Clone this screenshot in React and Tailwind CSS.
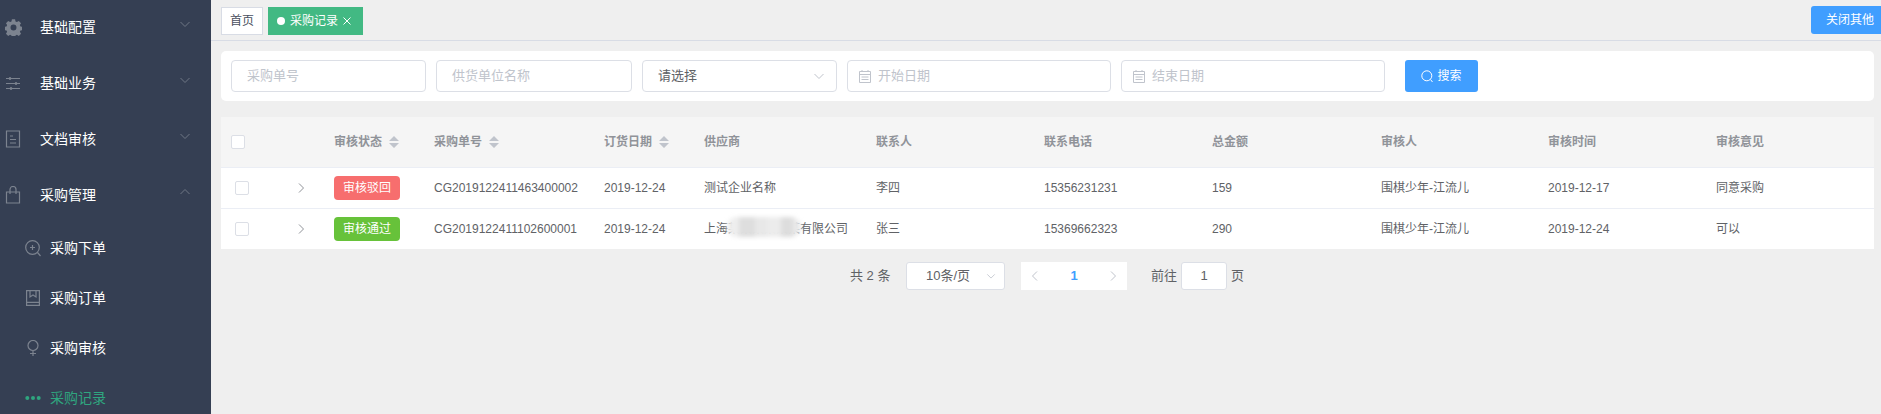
import React from "react";

const FONT = "font-['Liberation_Sans','Noto_Sans_CJK_SC',sans-serif]";

const Chevron = ({ dir = "down", className = "", size = 12, color = "currentColor", sw = 1 }) => {
  const d = {
    down: "M1.5 4 L6 8.5 L10.5 4",
    up: "M1.5 8 L6 3.5 L10.5 8",
    right: "M4 1.5 L8.5 6 L4 10.5",
    left: "M8 1.5 L3.5 6 L8 10.5",
  }[dir];
  return (
    <svg width={size} height={size} viewBox="0 0 12 12" fill="none" stroke={color} strokeWidth={sw} className={className}>
      <path d={d} />
    </svg>
  );
};

const Gear = () => (
  <svg width="17" height="17" viewBox="0 0 16 16" fill="#7c838f">
    <path fillRule="evenodd" d="M6.5 0.3h3l.4 2 1.3.6 1.8-1.1 2.1 2.1-1.1 1.8.6 1.3 2 .4v3l-2 .4-.6 1.3 1.1 1.8-2.1 2.1-1.8-1.1-1.3.6-.4 2h-3l-.4-2-1.3-.6-1.8 1.1-2.1-2.1 1.1-1.8-.6-1.3-2-.4v-3l2-.4.6-1.3-1.1-1.8 2.1-2.1 1.8 1.1 1.3-.6zM8 5.2a2.8 2.8 0 1 0 0 5.6a2.8 2.8 0 0 0 0-5.6z" />
  </svg>
);
const Sliders = () => (
  <svg width="16" height="16" viewBox="0 0 16 16" fill="#7c838f" stroke="#7c838f" strokeWidth="1">
    <path d="M1 3.5h14M1 8.5h14M1 13.5h14" />
    <circle cx="5" cy="3.5" r="1" />
    <circle cx="11" cy="8.5" r="1" />
    <circle cx="6" cy="13.5" r="1" />
  </svg>
);
const Doc = () => (
  <svg width="16" height="18" viewBox="0 0 16 18" fill="none" stroke="#7c838f" strokeWidth="1.2">
    <path d="M1.5 1h13v16h-13z" />
    <path d="M5 6h3M5 9.5h6M5 13h6" />
  </svg>
);
const Bag = () => (
  <svg width="16" height="18" viewBox="0 0 16 18" fill="none" stroke="#7c838f" strokeWidth="1.2">
    <path d="M1.5 6h13v11h-13z" />
    <path d="M5 8V3.5a3 3 0 0 1 6 0V8" />
  </svg>
);
const ZoomPlus = () => (
  <svg width="16" height="17" viewBox="0 0 16 17" fill="none" stroke="#7c838f" strokeWidth="1.2">
    <circle cx="7.5" cy="7.5" r="6.8" />
    <path d="M7.5 5v5M5 7.5h5M12.5 12.5l3 3.5" />
  </svg>
);
const Book = () => (
  <svg width="14" height="16" viewBox="0 0 14 16" fill="none" stroke="#7c838f" strokeWidth="1.2">
    <path d="M.6.6h12.8v14.8H.6z" />
    <path d="M.6 12.4h12.8M4 .6v6.4l3-2 3 2V.6" />
  </svg>
);
const Female = () => (
  <svg width="12" height="16" viewBox="0 0 12 16" fill="none" stroke="#7c838f" strokeWidth="1.2">
    <circle cx="6" cy="5.5" r="5" />
    <path d="M6 10.5V16M3 13.5h6" />
  </svg>
);
const Dots = () => (
  <svg width="16" height="6" viewBox="0 0 16 6" fill="#2fa57f">
    <circle cx="2.3" cy="3" r="2" />
    <circle cx="8" cy="3" r="2" />
    <circle cx="13.7" cy="3" r="2" />
  </svg>
);
const Calendar = () => (
  <svg width="12" height="13" viewBox="0 0 12 13" fill="none" stroke="#c0c4cc" strokeWidth="1">
    <path d="M.5 1.5h11v11H.5zM.5 4.5h11M2.5 7h7M2.5 9.5h7M3 0v2M9 0v2" />
  </svg>
);
const Search = ({ color = "#fff" }) => (
  <svg width="12" height="13" viewBox="0 0 12 13" fill="none" stroke={color} strokeWidth="1">
    <circle cx="5.8" cy="5.8" r="5" />
    <path d="M9.5 9.5l2 2.5" />
  </svg>
);

const Caret = () => (
  <svg width="10" height="12" viewBox="0 0 10 12" fill="#c0c4cc" className="ml-[7px] shrink-0">
    <path d="M5 0L10 5H0zM0 7H10L5 12z" />
  </svg>
);

const Box = ({ className = "" }) => (
  <span className={`block h-[14px] w-[14px] rounded-[2px] border border-[#dcdfe6] bg-white ${className}`} />
);

const TopItem = ({ icon, label, open }) => (
  <div className="flex h-[56px] items-center text-[14px] text-white">
    <span className="flex w-[26px] justify-center">{icon}</span>
    <span className="ml-[14px] flex-1">{label}</span>
    <Chevron dir={open ? "up" : "down"} color="#6f7785" className="mr-[20px] -mt-[6px]" />
  </div>
);
const SubItem = ({ icon, label, active }) => (
  <div className={`flex h-[50px] items-center text-[14px] ${active ? "text-[#2fa57f]" : "text-white"}`}>
    <span className="ml-[25px] flex w-[16px] justify-center">{icon}</span>
    <span className="ml-[9px]">{label}</span>
  </div>
);

const Field = ({ width, icon, children }) => (
  <div className={`flex h-[32px] items-center rounded-[4px] border border-[#dcdfe6] bg-white text-[13px] text-[#c0c4cc] ${width}`}>
    {icon ? <span className="ml-[11px] mr-[7px] flex">{icon}</span> : <span className="w-[15px]" />}
    <span>{children}</span>
  </div>
);

const COLS = "grid grid-cols-[60px_43px_100px_170px_100px_172px_168px_168px_169px_167px_168px_168px]";

const HeadCell = ({ children, sort }) => (
  <div className="flex items-center pl-[10px] text-[12px] font-bold text-[#909399]">
    <span>{children}</span>
    {sort && <Caret />}
  </div>
);
const Cell = ({ children }) => (
  <div className="flex items-center pl-[10px] text-[12px] text-[#606266]">{children}</div>
);

const Row = ({ badge, badgeColor, no, date, supplier, contact, phone, total, checker, time, opinion, last }) => (
  <div className={`${COLS} bg-white ${last ? "h-[40px]" : "h-[41px] border-b border-[#ebeef5]"}`}>
    <div className="flex items-center pl-[14px]"><Box /></div>
    <div className="flex items-center pl-[14px] text-[#909399]"><Chevron dir="right" size={12} color="#909399" /></div>
    <div className="flex items-center pl-[10px]">
      <span className={`flex h-[24px] w-[66px] items-center justify-center rounded-[4px] text-[12px] text-white ${badgeColor}`}>{badge}</span>
    </div>
    <Cell>{no}</Cell>
    <Cell>{date}</Cell>
    <Cell>{supplier}</Cell>
    <Cell>{contact}</Cell>
    <Cell>{phone}</Cell>
    <Cell>{total}</Cell>
    <Cell>{checker}</Cell>
    <Cell>{time}</Cell>
    <Cell>{opinion}</Cell>
  </div>
);

const Blurred = () => (
  <span className="relative whitespace-nowrap">
    上海某某某某某某有限公司
    <span className="absolute left-[23px] top-[-3px] flex h-[20px] w-[74px] overflow-hidden rounded-[10px] bg-[#ececec] blur-[2px]">
      <span className="w-[12px] bg-[#eeeeee]" />
      <span className="w-[16px] bg-[#dedede]" />
      <span className="w-[12px] bg-[#e8e8e8]" />
      <span className="w-[14px] bg-[#ececec]" />
      <span className="w-[12px] bg-[#dddddd]" />
      <span className="w-[8px] bg-[#eaeaea]" />
    </span>
  </span>
);

export default function App() {
  return (
    <div className={`flex h-[414px] w-full overflow-hidden bg-[#efefef] ${FONT}`}>
      <aside className="w-[211px] shrink-0 overflow-hidden bg-[#353f53]">
        <div className="-mt-px">
          <TopItem icon={<Gear />} label="基础配置" />
          <TopItem icon={<Sliders />} label="基础业务" />
          <TopItem icon={<Doc />} label="文档审核" />
          <TopItem icon={<Bag />} label="采购管理" open />
          <SubItem icon={<ZoomPlus />} label="采购下单" />
          <SubItem icon={<Book />} label="采购订单" />
          <SubItem icon={<Female />} label="采购审核" />
          <SubItem icon={<Dots />} label="采购记录" active />
        </div>
      </aside>

      <main className="flex min-w-0 flex-1 flex-col pl-[10px] pr-[7px]">
        <div className="-ml-[10px] -mr-[7px] flex h-[41px] shrink-0 items-start border-b border-[#d8dce5] pl-[10px] pt-[7px]">
          <span className="flex h-[28px] w-[42px] items-center justify-center border border-[#d8dce5] bg-white text-[12px] text-[#495060]">首页</span>
          <span className="ml-[5px] flex h-[28px] w-[95px] items-center bg-[#42b983] pl-[9px] text-[12px] text-white">
            <span className="mr-[5px] h-[8px] w-[8px] rounded-full bg-white" />
            采购记录
            <svg width="8" height="8" viewBox="0 0 8 8" stroke="#fff" strokeWidth="1" className="ml-[5px]"><path d="M.5.5l7 7M7.5.5l-7 7" /></svg>
          </span>
          <span className="-mr-[10px] -mt-px ml-auto flex h-[28px] w-[80px] shrink-0 items-center rounded-[3px] bg-[#409eff] pl-[15px] text-[12px] text-white">关闭其他</span>
        </div>

        <div className="mt-[10px] flex h-[50px] shrink-0 items-center rounded-[5px] bg-white pl-[10px]">
          <Field width="w-[195px]">采购单号</Field>
          <div className="ml-[10px]"><Field width="w-[196px]">供货单位名称</Field></div>
          <div className="ml-[10px] flex h-[32px] w-[195px] items-center justify-between rounded-[4px] border border-[#dcdfe6] bg-white pl-[15px] pr-[11px] text-[13px] text-[#606266]">
            <span>请选择</span>
            <Chevron color="#c0c4cc" />
          </div>
          <div className="ml-[10px]"><Field width="w-[264px]" icon={<Calendar />}>开始日期</Field></div>
          <div className="ml-[10px]"><Field width="w-[264px]" icon={<Calendar />}>结束日期</Field></div>
          <span className="ml-[20px] flex h-[32px] w-[73px] items-center justify-center gap-[4px] rounded-[3px] bg-[#409eff] text-[12px] text-white">
            <Search />搜索
          </span>
        </div>

        <div className="mt-[16px] shrink-0">
          <div className={`${COLS} h-[51px] border-b border-[#ebeef5] bg-[#f5f5f5]`}>
            <div className="flex items-center pl-[10px]"><Box /></div>
            <div />
            <HeadCell sort>审核状态</HeadCell>
            <HeadCell sort>采购单号</HeadCell>
            <HeadCell sort>订货日期</HeadCell>
            <HeadCell>供应商</HeadCell>
            <HeadCell>联系人</HeadCell>
            <HeadCell>联系电话</HeadCell>
            <HeadCell>总金额</HeadCell>
            <HeadCell>审核人</HeadCell>
            <HeadCell>审核时间</HeadCell>
            <HeadCell>审核意见</HeadCell>
          </div>
          <Row badge="审核驳回" badgeColor="bg-[#f76e6e]" no="CG2019122411463400002" date="2019-12-24" supplier="测试企业名称" contact="李四" phone="15356231231" total="159" checker="围棋少年-江流儿" time="2019-12-17" opinion="同意采购" />
          <Row last badge="审核通过" badgeColor="bg-[#67c23a]" no="CG2019122411102600001" date="2019-12-24" supplier={<Blurred />} contact="张三" phone="15369662323" total="290" checker="围棋少年-江流儿" time="2019-12-24" opinion="可以" />
        </div>

        <div className="mt-[13px] flex shrink-0 items-start pl-[629px] text-[13px] text-[#606266]">
          <span className="flex h-[28px] w-[56px] items-center">共 2 条</span>
          <span className="flex h-[28px] w-[99px] items-center justify-between rounded-[3px] border border-[#dcdfe6] bg-white pl-[19px] pr-[8px]">
            <span>10条/页</span>
            <Chevron color="#c0c4cc" size={10} />
          </span>
          <span className="ml-[16px] flex h-[28px] w-[106px] items-center justify-between bg-white pl-[8px] pr-[8px]">
            <Chevron dir="left" color="#c0c4cc" />
            <span className="font-bold text-[#409eff]">1</span>
            <Chevron dir="right" color="#c0c4cc" />
          </span>
          <span className="ml-[24px] flex h-[28px] items-center">前往</span>
          <span className="ml-[4px] flex h-[28px] w-[46px] items-center justify-center rounded-[3px] border border-[#dcdfe6] bg-white">1</span>
          <span className="ml-[4px] flex h-[28px] items-center">页</span>
        </div>
      </main>
    </div>
  );
}
